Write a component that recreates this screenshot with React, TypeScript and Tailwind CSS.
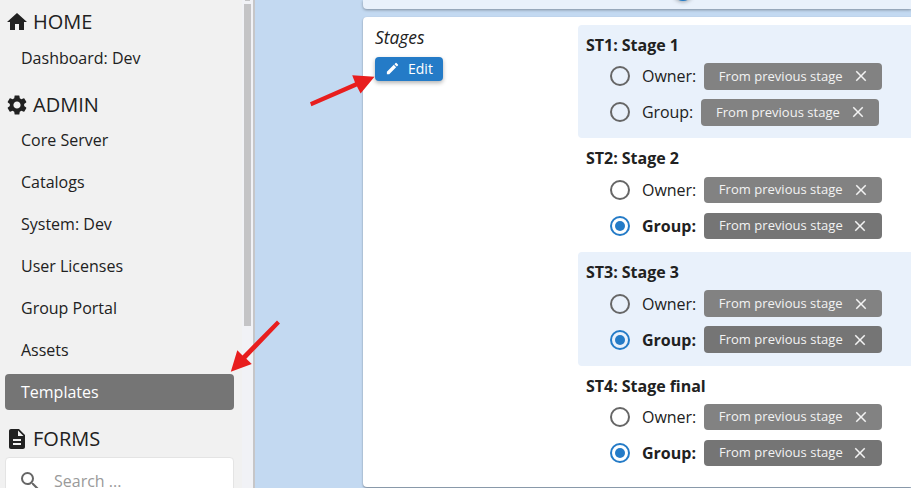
import type { ReactNode } from "react";
import { MdClose, MdDescription, MdEdit, MdHome, MdSearch, MdSettings } from "react-icons/md";

const adminItems = ["Core Server", "Catalogs", "System: Dev", "User Licenses", "Group Portal", "Assets", "Templates"];

const stages = [
  { title: "ST1: Stage 1", group: false },
  { title: "ST2: Stage 2", group: true },
  { title: "ST3: Stage 3", group: true },
  { title: "ST4: Stage final", group: true },
];

function Heading({ icon, children }: { icon: ReactNode; children: ReactNode }) {
  return (
    <div className="flex h-6 items-center gap-1 pl-[5px] text-xl leading-6">
      {icon}
      <span>{children}</span>
    </div>
  );
}

function NavItem({ label, active = false }: { label: string; active?: boolean }) {
  return (
    <div
      className={`ml-[5px] flex h-9 w-[229px] shrink-0 items-center rounded pl-4 ${active ? "bg-[#757575] text-white" : ""}`}
    >
      {label}
    </div>
  );
}

function Radio({ checked }: { checked: boolean }) {
  return (
    <span
      className={`flex size-5 shrink-0 items-center justify-center rounded-full border-2 ${checked ? "border-[#247bc7]" : "border-[#666]"}`}
    >
      {checked && <span className="size-2.5 rounded-full bg-[#247bc7]" />}
    </span>
  );
}

function Assignee({ label, checked }: { label: string; checked: boolean }) {
  return (
    <div className="flex h-9 items-center pl-8">
      <Radio checked={checked} />
      <span className={`ml-3 ${checked ? "font-bold" : "tracking-[-0.06px]"}`}>{label}:</span>
      <span
        className={`flex h-[26.4px] w-[178px] items-center justify-between rounded pl-[15px] text-[13px] text-[#f3f3f3] ${checked ? "ml-2 bg-[#757575] pr-[13px]" : "ml-[7.8px] bg-[#828282] pr-3"}`}
      >
        <span className="tracking-[0.02px]">From previous stage</span>
        <MdClose className="size-[18px]" />
      </span>
    </div>
  );
}

export default function App() {
  return (
    <div className="relative flex h-[488px] w-[911px] overflow-hidden bg-[#c3d9f1] font-['Open_Sans','Noto_Sans',sans-serif] text-base text-[#212121]">
      <aside className="flex w-[255px] shrink-0 border-r-2 border-[#c6c6c8] bg-[#f1f1f1]">
        <div className="flex w-[242px] flex-col pt-[10px]">
          <Heading icon={<MdHome className="size-6" />}>HOME</Heading>
          <div className="mt-1.5">
            <NavItem label="Dashboard: Dev" />
          </div>
          <div className="mt-[17px]">
            <Heading icon={<MdSettings className="size-6" />}>ADMIN</Heading>
          </div>
          <nav className="mt-[5px] flex flex-col gap-1.5">
            {adminItems.map((item) => (
              <NavItem key={item} label={item} active={item === "Templates"} />
            ))}
          </nav>
          <div className="mt-[17px]">
            <Heading icon={<MdDescription className="size-6" />}>FORMS</Heading>
          </div>
          <div className="mt-[6px] ml-[5px] flex h-12 w-[229px] shrink-0 items-center rounded border border-[#e4e4e4] bg-white pl-[12px] text-[#9a9a9a]">
            <MdSearch className="size-6 text-[#666]" />
            <span className="ml-3">Search ...</span>
          </div>
        </div>
        <div className="flex w-[11px] flex-col items-center bg-[#f1f2f6]">
          <div className="h-px w-[5px] bg-[#c4c4c6]" />
          <div className="mt-[3px] h-[322px] w-[7px] bg-[#c4c4c6]" />
        </div>
      </aside>
      <main className="flex min-w-0 flex-1 flex-col gap-2 pl-[108px]">
        <section className="flex h-[9px] shrink-0 items-start rounded-bl bg-[#e9f1fb] pl-[310px] shadow-[0_1px_3px_rgba(0,0,0,0.35)]">
          <span className="-mt-[19px] size-5 shrink-0 rounded-full bg-[#247bc7] shadow-[0_1px_4px_rgba(0,0,0,0.35)]" />
        </section>
        <section className="flex h-[470px] shrink-0 rounded-l bg-white pt-[7.8px] shadow-[0_1px_2px_rgba(0,0,0,0.4)]">
          <div className="w-[215px] shrink-0 pl-3">
            <div className="h-6 text-[17.4px] leading-6 italic">Stages</div>
            <button className="mt-[8.2px] flex h-6 w-[68px] items-center rounded bg-[#247bc7] pl-2.5 text-sm text-white shadow-[0_2px_4px_rgba(0,0,0,0.3)]">
              <MdEdit className="size-[15px]" />
              <span className="ml-2">Edit</span>
            </button>
          </div>
          <div className="flex-1">
            {stages.map((stage, index) => (
              <div
                key={stage.title}
                className={`h-[113.6px] rounded-l pt-2 ${index % 2 === 0 ? "bg-[#e9f1fb]" : ""}`}
              >
                <h2 className="h-[25.6px] pl-2 font-bold tracking-[-0.03px]">{stage.title}</h2>
                <Assignee label="Owner" checked={false} />
                <Assignee label="Group" checked={stage.group} />
              </div>
            ))}
          </div>
        </section>
      </main>
      <svg className="pointer-events-none absolute inset-0 size-full" viewBox="0 0 911 488" fill="#e81e1e">
        <path d="M310 102.2 355 82.6 352.2 75.3 374.5 76.8 360.6 93.6 357 86.4 311.4 106.2Z" />
        <path d="M277 320.6 242.5 355.5 237.3 350.2 230.8 371.8 251.8 364 246.3 358.8 280 323.4Z" />
      </svg>
    </div>
  );
}
